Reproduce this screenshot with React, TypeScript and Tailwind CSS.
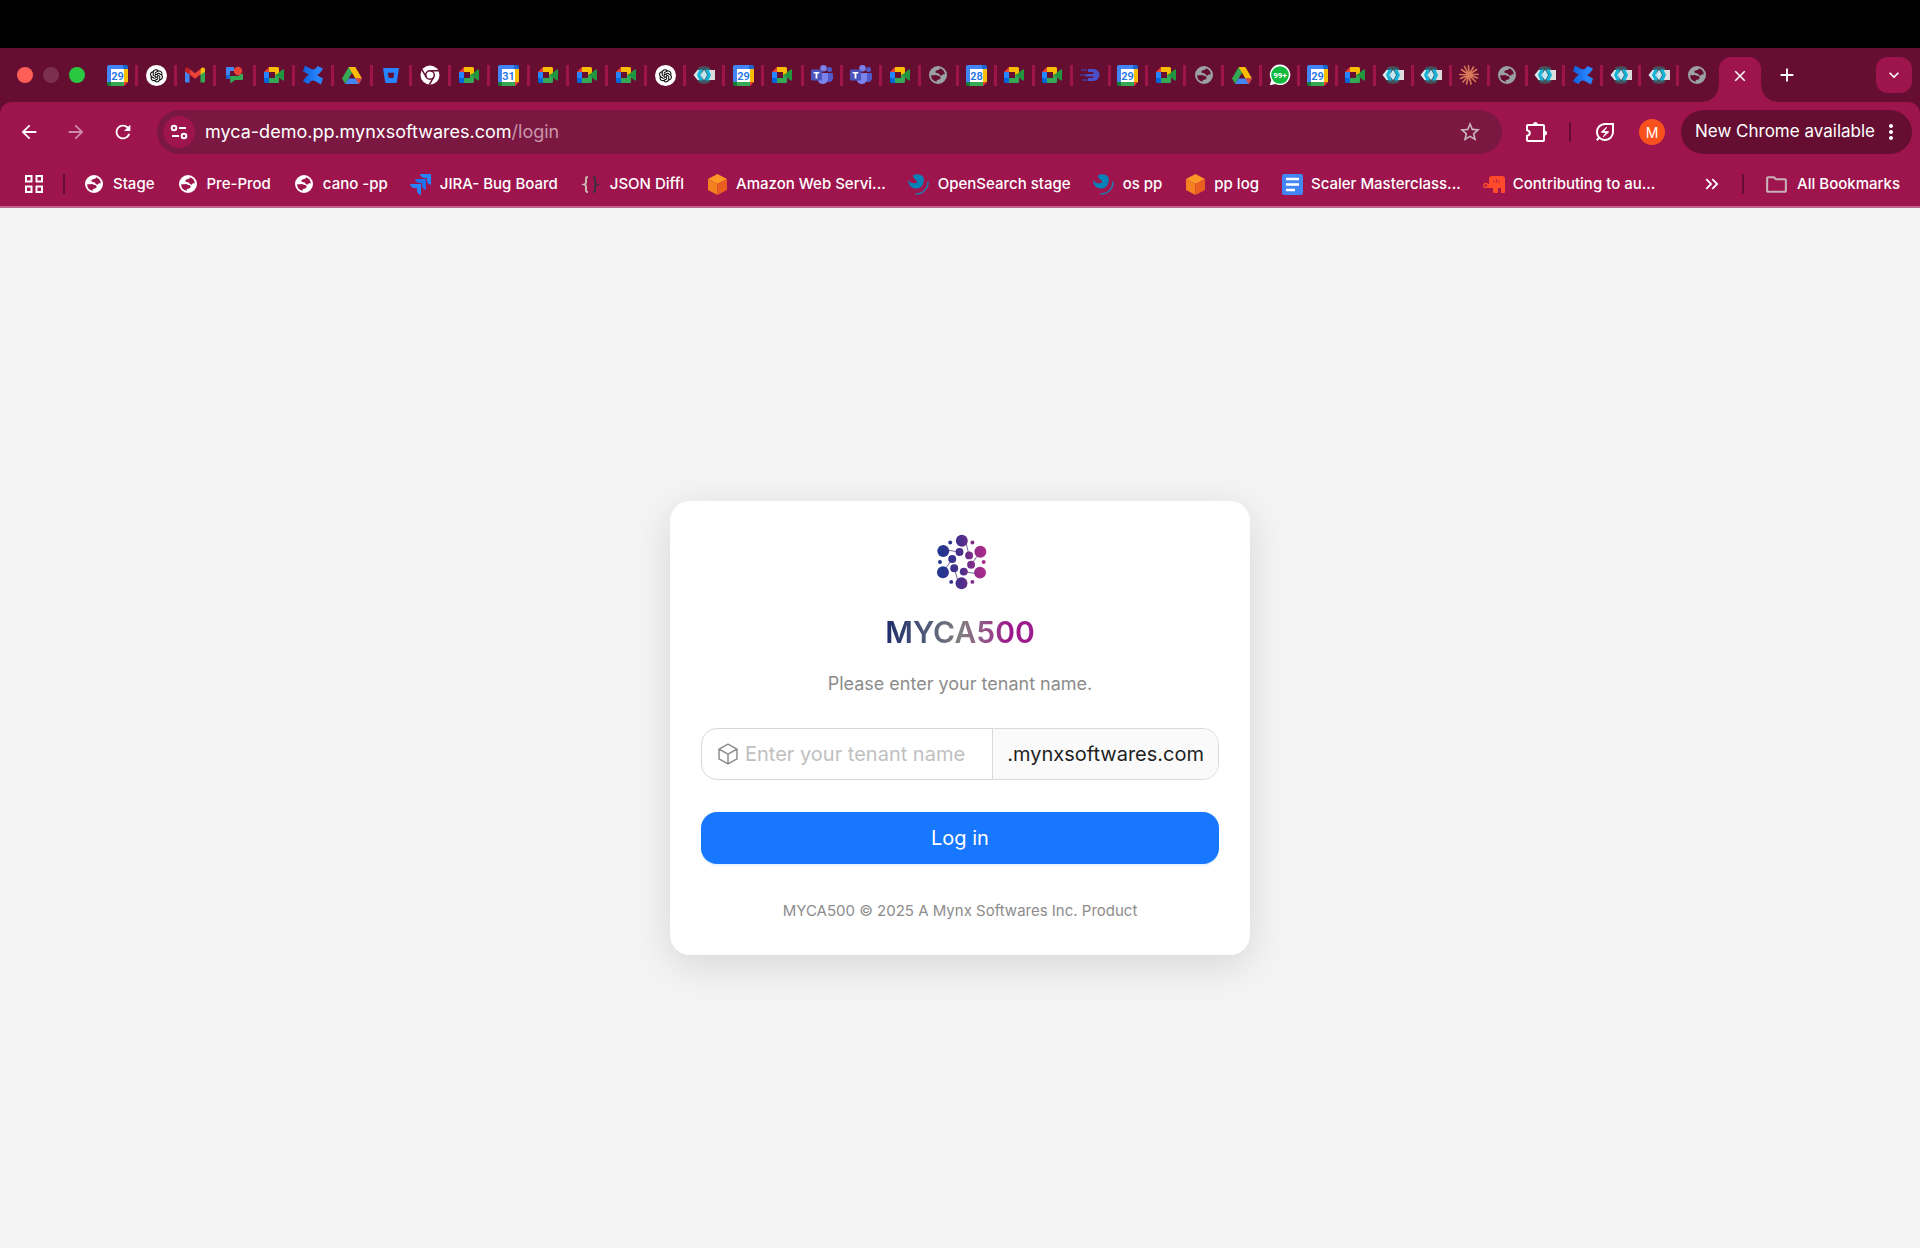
import React from "react";
import {
  MdArrowBack,
  MdArrowForward,
  MdRefresh,
  MdStarBorder,
  MdOutlineEnergySavingsLeaf,
  MdMoreVert,
  MdClose,
  MdAdd,
  MdExpandMore,
  MdOutlineFolder,
  MdKeyboardDoubleArrowRight,
} from "react-icons/md";
import { AiOutlineOpenAI } from "react-icons/ai";

/* ---------- favicons ---------- */

function Calendar({ day }: { day: string }) {
  return (
    <svg viewBox="0 0 21 21" className="size-[21px]">
      <path d="M0 2a2 2 0 0 1 2-2h14v4H4v13H0z" fill="#4285f4" />
      <path d="M16 0h3a2 2 0 0 1 2 2v2h-5z" fill="#1967d2" />
      <path d="M17 4h4v13h-4z" fill="#fbbc04" />
      <path d="M4 17h13v4H4z" fill="#34a853" />
      <path d="M0 17h4v4H2a2 2 0 0 1-2-2z" fill="#188038" />
      <path d="M17 17h4l-4 4z" fill="#ea4335" />
      <path d="M4 4h13v13H4z" fill="#fff" />
      <text x="10.5" y="14.5" textAnchor="middle" fontSize="11" fontWeight="600" fill="#1a73e8" fontFamily="Roboto, sans-serif">
        {day}
      </text>
    </svg>
  );
}

function OpenAi() {
  return (
    <span className="flex size-[21px] items-center justify-center rounded-full bg-white text-black">
      <AiOutlineOpenAI size={17} />
    </span>
  );
}

function Gmail() {
  return (
    <svg viewBox="0 0 20 16" className="h-4 w-5">
      <path d="M0 3v11.500a1 1 0 0 0 1 1h3.500V6.500z" fill="#4285f4" />
      <path d="M20 3v11.500a1 1 0 0 1-1 1h-3.500V6.500z" fill="#34a853" />
      <path d="M4.500 2v5.500L10 11.700l5.500-4.200V2L10 6.200z" fill="#ea4335" />
      <path d="M0 2.500v2l4.500 3.200V2L3.500 1C2 0 0 .700 0 2.500z" fill="#c5221f" />
      <path d="M20 2.500v2l-4.500 3.200V2l1-1C18 0 20 .700 20 2.500z" fill="#fbbc04" />
    </svg>
  );
}

function Chat() {
  return (
    <svg viewBox="0 0 20 20" className="size-5">
      <path d="M2 3a1 1 0 0 1 1-1h7v4H6v7H2z" fill="#4285f4" />
      <path d="M2 10h4v4H3a1 1 0 0 1-1-1z" fill="#1967d2" />
      <path d="M6 11h9V9h4v5a1 1 0 0 1-1 1h-7l-4.500 3.500z" fill="#34a853" />
      <circle cx="14" cy="6" r="4.200" fill="#ea4335" />
    </svg>
  );
}

function Meet() {
  return (
    <svg viewBox="0 0 20 16" className="h-4 w-5">
      <path d="M0 5l5-5v5z" fill="#ea4335" />
      <path d="M5 0h8.500a1.500 1.500 0 0 1 1.500 1.500V7l-4 1V5H5z" fill="#fbbc04" />
      <path d="M0 5h5v6H0z" fill="#2684fc" />
      <path d="M0 11h5v5H1.500A1.500 1.500 0 0 1 0 14.500z" fill="#0066da" />
      <path d="M5 11h6V8l4-1v7.500a1.500 1.500 0 0 1-1.500 1.500H5z" fill="#34a853" />
      <path d="M12 8l6.600-5.500c.600-.400 1.400 0 1.400.700v9.600c0 .700-.800 1.100-1.400.700z" fill="#22963f" />
    </svg>
  );
}

function Confluence() {
  return (
    <svg viewBox="0 0 22 22" className="size-[22px]">
      <defs>
        <linearGradient id="confluence" x1="0" x2="1">
          <stop offset="0" stopColor="#0f5fd8" />
          <stop offset="0.700" stopColor="#2684ff" />
        </linearGradient>
      </defs>
      <path d="M3 1.500l5.500 3.200c3 1.500 5 .700 7-2.700l5.500 2.500c-4 7.500-8.500 9-15 5.800L1 7.500z" fill="url(#confluence)" />
      <path d="M19 20.500l-5.500-3.200c-3-1.500-5-.700-7 2.700L1 17.500c4-7.500 8.500-9 15-5.800l5 2.800z" fill="url(#confluence)" />
    </svg>
  );
}

function Drive() {
  return (
    <svg viewBox="0 0 20 17" className="h-[17px] w-5">
      <path d="M6.700 0h6.600L10 5.700 3.300 17 0 11.500z" fill="#34a853" />
      <path d="M6.700 0h6.600L20 11.500h-6.600z" fill="#fbbc04" />
      <path d="M3.300 17l3.400-5.500H20L16.700 17z" fill="#4285f4" />
      <path d="M13.400 11.500H20L16.700 17z" fill="#ea4335" />
    </svg>
  );
}

function Bitbucket() {
  return (
    <svg viewBox="0 0 16 15" className="h-[15px] w-4">
      <path d="M.700 0h14.600a.600.600 0 0 1 .600.700l-2.100 13.500a1 1 0 0 1-1 .800H3.200a1 1 0 0 1-1-.800L.100.700A.600.600 0 0 1 .700 0zm5 10h4.600l1-5.200H4.700z" fillRule="evenodd" fill="#2684ff" />
    </svg>
  );
}

function ChromeLogo() {
  return (
    <svg viewBox="0 0 20 20" className="size-5">
      <circle cx="10" cy="10" r="9.500" fill="#fff" />
      <g fill="none" stroke="#650e32" strokeWidth="1.500">
        <circle cx="10" cy="10" r="4.300" />
        <path d="M10 5.700h8.800M6.300 12.200L1.900 4.600M13.700 12.200l-4.400 7.500" />
      </g>
    </svg>
  );
}

function Hexes() {
  return (
    <svg viewBox="0 0 22 18" className="h-[18px] w-[22px]">
      <path d="M6 1l5-1 5 1 2 3v10l-2 3-5 1-5-1-2-3V4z" fill="#46505a" />
      <path d="M15 4h7v10h-7z" fill="#dcdcdc" />
      <path d="M4.500 4h4v10h-4L.500 9z" fill="#d8e8ec" />
      <path d="M6.500 3.500H10L7.300 9l2.700 5.500H6.500L4 9z" fill="#14b4d8" />
      <path d="M12 3.500h3.500L18 9l-2.500 5.500H12L14.700 9z" fill="#14b4d8" />
      <path d="M10.300 4.500h1.400L14 9l-2.300 4.500h-1.400L8 9z" fill="#c4e9f2" />
    </svg>
  );
}

function Teams() {
  return (
    <svg viewBox="0 0 22 20" className="h-5 w-[22px]">
      <circle cx="18.500" cy="4.500" r="2.500" fill="#5059c9" />
      <circle cx="12.500" cy="3.300" r="3.300" fill="#7b83eb" />
      <path d="M15 8h6a1 1 0 0 1 1 1v4.500a4 4 0 0 1-6 3z" fill="#5059c9" />
      <path d="M7 8h10v6.500a5.300 5.300 0 0 1-10 1.500z" fill="#7b83eb" />
      <rect x="0" y="4.500" width="11" height="11" rx="1" fill="#4b53bc" />
      <path d="M2.700 7h5.600v1.600H6.400v5H4.600v-5H2.700z" fill="#fff" />
    </svg>
  );
}

function Globe({ tone = "text-white" }: { tone?: string }) {
  return (
    <svg viewBox="0 0 18 18" className={`size-[18px] ${tone}`} fill="currentColor">
      <path
        fillRule="evenodd"
        d="M9 0a9 9 0 1 1 0 18A9 9 0 0 1 9 0zM11 2.200C10.700 4 9.600 4 8 4.200 6 4.600 5.900 6.600 7.600 7c1.800.200 2.300.300 2.900 1.600.800 1.500 2.500 1.200 3 .200.500-.800 1.300-.6 2.300-.4A6.900 6.900 0 0 0 11 2.200zM2.100 9.300a6.900 6.900 0 0 0 5.700 6.500v-1.900c2.300 0 3.700-.700 3.800-2.100 0-1.300-1.200-1.700-2.400-1.700C8 9 6.900 9 5.500 9.200z"
      />
    </svg>
  );
}

function SpeedD() {
  return (
    <svg viewBox="0 0 20 14" className="h-[14px] w-5">
      <path d="M8 1h5.500a6 6 0 0 1 0 12H8v-3h5a2.500 2.500 0 0 0 0-1.500H5V6h8.500a2 2 0 0 0-.5-2H8z" fill="#4a50c8" />
      <path d="M1 2h6M0 7h7M2 12h6" stroke="#463a98" strokeWidth="1.500" />
    </svg>
  );
}

function WhatsApp() {
  return (
    <svg viewBox="0 0 22 22" className="size-[22px]">
      <path d="M11 .500a10.300 10.300 0 1 1-4.800 19.400L.800 21.300l1.500-5.200A10.300 10.300 0 0 1 11 .500z" fill="#fff" />
      <circle cx="11" cy="11" r="8.800" fill="#12b93f" />
      <text x="11" y="14" textAnchor="middle" fontSize="8" fontWeight="700" fill="#fff" fontFamily="Roboto, sans-serif">
        99+
      </text>
    </svg>
  );
}

function Claude() {
  return (
    <svg viewBox="0 0 20 20" className="size-5" stroke="#d97757" strokeWidth="1.600" strokeLinecap="round">
      <path d="M10 10L9.500.800M10 10l4.500-8M10 10l7.500-5.500M10 10l9.200-.800M10 10l8.500 3M10 10l6.500 6.500M10 10l2 9M10 10l-2.500 9M10 10l-6 7M10 10l-8.500 3.500M10 10L.800 9.500M10 10L2.500 4.500M10 10L5.500 1.500" />
    </svg>
  );
}

/* ---------- bookmark icons ---------- */

function Jira() {
  return (
    <svg viewBox="0 0 21 21" className="size-[21px]">
      <path d="M10 0h11v11a5 5 0 0 1-4-4.700V4h-2.500A5 5 0 0 1 10 0z" fill="#2684ff" />
      <path d="M5 5h11v11a5 5 0 0 1-4-4.700V9H9.500A5 5 0 0 1 5 5z" fill="#1f74ee" />
      <path d="M0 10h11v11a5 5 0 0 1-4-4.700V14H4.500A5 5 0 0 1 0 10z" fill="#2684ff" />
    </svg>
  );
}

function Braces() {
  return (
    <svg viewBox="0 0 21 21" className="size-[21px]" fill="none" strokeWidth="2">
      <path d="M8 3H7.500C6.300 3 6 3.700 6 5v3c0 1.500-.500 2.200-1.500 2.500 1 .300 1.500 1 1.500 2.500v3c0 1.300.300 2 1.500 2H8" stroke="#c9b9b0" />
      <path d="M13 3h.5c1.200 0 1.500.700 1.500 2v3c0 1.500.500 2.200 1.500 2.500-1 .300-1.500 1-1.500 2.500v3c0 1.300-.300 2-1.500 2H13" stroke="#3c3038" />
    </svg>
  );
}

function Cube() {
  return (
    <svg viewBox="0 0 19 21" className="h-[21px] w-[19px]">
      <path d="M9.500 0L19 5l-9.500 5L0 5z" fill="#fd9827" />
      <path d="M0 5l9.500 5v11L0 16z" fill="#f58020" />
      <path d="M19 5l-9.500 5v11l9.500-5z" fill="#ea5e20" />
    </svg>
  );
}

function OpenSearch() {
  return (
    <svg viewBox="0 0 21 21" className="size-[21px]">
      <path d="M5 1.500C8-.500 13-.300 15.200 3c1 1.600.800 3.200.300 4.500-.300 4.500-3.500 7.200-8 7C2.500 14.300-.200 10 .400 5.800 1.500 8.500 3.500 9.500 6 9.300c2.300-.100 3.500-1.100 2.600-2.600C7.600 5.300 5 4.500 5 1.500z" fill="#0782b8" />
      <path d="M20 8A12 12 0 0 1 8 20" fill="none" stroke="#1c7eae" strokeWidth="1.500" strokeLinecap="round" />
    </svg>
  );
}

function Doc() {
  return (
    <svg viewBox="0 0 21 21" className="size-[21px]">
      <rect width="21" height="21" rx="2" fill="#4285f4" />
      <path d="M4 5h13M4 10.500h13M4 16h9" stroke="#fff" strokeWidth="2.400" />
    </svg>
  );
}

function RedBot() {
  return (
    <svg viewBox="0 0 22 17" className="h-[17px] w-[22px]">
      <path d="M9 0h10a3 3 0 0 1 3 3v13a1 1 0 0 1-1 1h-3v-5h-3v5h-4a1 1 0 0 1-1-1v-4H5v-4h1V3a3 3 0 0 1 3-3z" fill="#ff4a2b" />
      <path d="M11 4v3M13.500 3v4M16 4v3" stroke="#b8283a" />
      <circle cx="2.800" cy="9.500" r="2" fill="none" stroke="#ff4a2b" strokeWidth="1.400" />
    </svg>
  );
}

/* ---------- browser data ---------- */

type Item = { name: string; icon: React.ReactNode };

const meet: Item = { name: "Meet", icon: <Meet /> };
const chat: Item = { name: "ChatGPT", icon: <OpenAi /> };
const hex: Item = { name: "Portal", icon: <Hexes /> };
const globe: Item = { name: "Page", icon: <Globe tone="text-[#9aa0a6]" /> };
const drive: Item = { name: "Drive", icon: <Drive /> };
const confluence: Item = { name: "Confluence", icon: <Confluence /> };
const teams: Item = { name: "Teams", icon: <Teams /> };
const cal = (day: string): Item => ({ name: `Calendar ${day}`, icon: <Calendar day={day} /> });

const wideTabs: Item[] = [
  cal("29"), chat, { name: "Gmail", icon: <Gmail /> }, { name: "Chat", icon: <Chat /> }, meet, confluence, drive,
  { name: "Bitbucket", icon: <Bitbucket /> }, { name: "Chrome", icon: <ChromeLogo /> }, meet, cal("31"), meet, meet, meet,
  chat, hex, cal("29"), meet, teams, teams, meet,
];

const narrowTabs: Item[] = [
  globe, cal("28"), meet, meet, { name: "Dashboard", icon: <SpeedD /> }, cal("29"), meet, globe, drive,
  { name: "WhatsApp", icon: <WhatsApp /> }, cal("29"), meet, hex, hex, { name: "Claude", icon: <Claude /> }, globe, hex,
  confluence, hex, hex, globe,
];

const bookmarks: Item[] = [
  { name: "Stage", icon: <Globe /> },
  { name: "Pre-Prod", icon: <Globe /> },
  { name: "cano -pp", icon: <Globe /> },
  { name: "JIRA- Bug Board", icon: <Jira /> },
  { name: "JSON Diffl", icon: <Braces /> },
  { name: "Amazon Web Servi...", icon: <Cube /> },
  { name: "OpenSearch stage", icon: <OpenSearch /> },
  { name: "os pp", icon: <OpenSearch /> },
  { name: "pp log", icon: <Cube /> },
  { name: "Scaler Masterclass...", icon: <Doc /> },
  { name: "Contributing to au...", icon: <RedBot /> },
];

function Tab({ item, last }: { item: Item; last?: boolean }) {
  return (
    <button
      aria-label={item.name}
      className={`flex h-[21px] min-w-0 flex-1 items-center justify-center border-r-[3px] ${last ? "border-transparent" : "border-[#9e154e]"}`}
    >
      {item.icon}
    </button>
  );
}

function TabStrip() {
  return (
    <div className="flex h-[54px] items-center bg-[#650e32] pr-2">
      <div className="flex w-[99px] shrink-0 gap-[10px] pl-[17px]">
        <button aria-label="Close window" className="size-4 rounded-full bg-[#ff5f57]" />
        <button aria-label="Minimize window" className="size-4 rounded-full bg-[#7b3051]" />
        <button aria-label="Zoom window" className="size-4 rounded-full bg-[#28c840]" />
      </div>
      <div className="flex flex-[822] items-center">
        {wideTabs.map((t, i) => (
          <Tab key={i} item={t} />
        ))}
      </div>
      <div className="flex flex-[796] items-center">
        {narrowTabs.map((t, i) => (
          <Tab key={i} item={t} last={i === narrowTabs.length - 1} />
        ))}
      </div>
      <div className="relative ml-[2px] flex w-[42px] items-center justify-center self-end rounded-t-xl bg-[#9e154e]">
        <span className="absolute right-full bottom-0 size-4 bg-[radial-gradient(circle_at_0_0,transparent_15px,#9e154e_16px)]" />
        <span className="absolute bottom-0 left-full size-4 bg-[radial-gradient(circle_at_100%_0,transparent_15px,#9e154e_16px)]" />
        <button aria-label="Close tab" className="flex h-[45px] items-center pb-2 text-white">
          <MdClose size={18} />
        </button>
      </div>
      <button aria-label="New tab" className="ml-[15px] text-white">
        <MdAdd size={22} />
      </button>
      <div className="w-[78px]" />
      <button aria-label="Search tabs" className="flex size-9 items-center justify-center rounded-xl bg-[#9e154e] text-white">
        <MdExpandMore size={20} />
      </button>
    </div>
  );
}

function Toolbar() {
  return (
    <div className="flex h-[60px] items-center pr-2 pl-[18px] text-white">
      <div className="flex shrink-0 items-center gap-[25px]">
        <button aria-label="Back"><MdArrowBack size={22} /></button>
        <button aria-label="Forward" className="opacity-50"><MdArrowForward size={22} /></button>
        <button aria-label="Reload"><MdRefresh size={22} /></button>
      </div>
      <div className="ml-[23px] flex h-11 min-w-0 flex-1 items-center rounded-full bg-[#7b1842] pr-5 pl-[6px]">
        <button aria-label="Site information" className="flex size-8 shrink-0 items-center justify-center rounded-full bg-[#9e154e]">
          <svg viewBox="0 0 18 16" className="h-4 w-[18px]" fill="none" stroke="currentColor" strokeWidth="2">
            <circle cx="4" cy="4" r="2.300" />
            <path d="M9 4h7M2 12h7" />
            <circle cx="14" cy="12" r="2.300" />
          </svg>
        </button>
        <div role="textbox" aria-label="Address" className="ml-[10px] flex-1 text-[18px] leading-6">
          myca-demo.pp.mynxsoftwares.com<span className="text-[#c996ab]">/login</span>
        </div>
        <button aria-label="Bookmark this page" className="text-[#cbb6be]"><MdStarBorder size={24} /></button>
      </div>
      <button aria-label="Extensions" className="ml-[22px]">
        <svg viewBox="0 0 24 24" className="size-6" fill="none" stroke="currentColor" strokeWidth="2" strokeLinejoin="round">
          <path d="M4 5h15a1 1 0 0 1 1 1v14a1 1 0 0 1-1 1H4a1 1 0 0 1-1-1v-4.200c1.800-.300 2.800-1.400 2.800-2.800S4.800 10.500 3 10.200V6a1 1 0 0 1 1-1z" />
          <path d="M9 4.500a2.500 2.500 0 0 1 5 0zM20.500 10.500a2.500 2.500 0 0 1 0 5z" fill="currentColor" stroke="none" />
        </svg>
      </button>
      <div className="ml-[21px] h-5 w-[2px] bg-[#650e32]" />
      <button aria-label="Energy saver" className="ml-[22px]"><MdOutlineEnergySavingsLeaf size={24} /></button>
      <button aria-label="Profile" className="ml-[22px] size-[26px] rounded-full bg-[#f8511d] text-[14px]">M</button>
      <button className="ml-4 flex h-11 items-center rounded-full bg-[#650e32] pr-[9px] pl-[14px] text-[17px]">
        New Chrome available
        <MdMoreVert size={24} className="ml-1" />
      </button>
    </div>
  );
}

function BookmarksBar() {
  return (
    <div className="flex h-[46px] items-center border-b-2 border-[#c0658a] pr-5 pl-[25px] text-[15px] font-medium text-white">
      <button aria-label="Tab groups">
        <svg viewBox="0 0 18 18" className="size-[18px]" fill="none" stroke="currentColor" strokeWidth="2">
          <path d="M1 1h5.500v5.500H1zM11.500 1H17v5.500h-5.500zM1 11.500h5.500V17H1zM11.500 11.500H17V17h-5.500z" />
        </svg>
      </button>
      <div className="ml-5 h-5 w-[2px] bg-[#650e32]" />
      <nav aria-label="Bookmarks" className="ml-[18px] flex min-w-0 flex-1 gap-[22px]">
        {bookmarks.map((b) => (
          <a key={b.name} href="#" className="flex items-center gap-2 whitespace-nowrap">
            <span className="flex w-[22px] justify-center">{b.icon}</span>
            {b.name}
          </a>
        ))}
      </nav>
      <button aria-label="More bookmarks"><MdKeyboardDoubleArrowRight size={22} /></button>
      <div className="ml-[19px] h-5 w-[2px] bg-[#650e32]" />
      <a href="#" className="ml-5 flex items-center gap-2">
        <MdOutlineFolder size={25} className="text-[#c9b0b9]" />
        All Bookmarks
      </a>
    </div>
  );
}

/* ---------- login page ---------- */

function Logo() {
  return (
    <svg viewBox="40 40 160 168" className="h-14 w-[53px]" role="img" aria-label="MYCA500 logo">
      <defs>
        <linearGradient id="brand" gradientUnits="userSpaceOnUse" x1="50" x2="198" y1="124" y2="124">
          <stop offset="0.100" stopColor="#25368f" />
          <stop offset="0.500" stopColor="#4d2f8c" />
          <stop offset="0.800" stopColor="#962b88" />
          <stop offset="1" stopColor="#ad2b8a" />
        </linearGradient>
      </defs>
      <path
        d="M137 68l9 36M68 86l49 8M67 155l28-40M101 143l11 36M130 153l49 8M180 93l-28 39"
        stroke="#5a4480"
        strokeWidth="2.500"
      />
      <g fill="url(#brand)">
        <circle cx="124" cy="60" r="18" />
        <circle cx="68" cy="91" r="18" />
        <circle cx="180" cy="93" r="18" />
        <circle cx="67" cy="155" r="18" />
        <circle cx="179" cy="156" r="18" />
        <circle cx="123" cy="188" r="18" />
        <circle cx="117" cy="94" r="12" />
        <circle cx="146" cy="104" r="12" />
        <circle cx="95" cy="115" r="12" />
        <circle cx="152" cy="132" r="12" />
        <circle cx="101" cy="143" r="12" />
        <circle cx="130" cy="153" r="12" />
        <circle cx="89" cy="65" r="6" />
        <circle cx="156" cy="65" r="6" />
        <circle cx="58" cy="124" r="6" />
        <circle cx="190" cy="124" r="6" />
        <circle cx="92" cy="184" r="6" />
        <circle cx="156" cy="184" r="6" />
      </g>
    </svg>
  );
}

function LoginCard() {
  return (
    <form
      onSubmit={(e) => e.preventDefault()}
      className="flex w-full max-w-[580px] flex-col items-center rounded-[20px] bg-white px-[31px] pt-[33px] pb-8 shadow-[0_10px_40px_rgba(0,0,0,0.12)]"
    >
      <Logo />
      <h1 className="mt-[22px] bg-linear-to-r from-[#1f2a6b] via-[#7f7f7f] to-[#9c1a8c] to-80% bg-clip-text text-[30px] leading-10 font-semibold text-transparent">
        MYCA500
      </h1>
      <p className="mt-[18px] text-[18px] leading-7 text-[#8c8c8c]">Please enter your tenant name.</p>
      <div className="mt-[30px] flex h-[52px] w-full overflow-hidden rounded-2xl border border-[#d9d9d9]">
        <label className="flex min-w-0 flex-1 items-center gap-[7px] pl-4">
          <svg viewBox="0 0 20 22" className="h-[22px] w-5 shrink-0" fill="none" stroke="#8c8c8c" strokeWidth="1.500" strokeLinejoin="round">
            <path d="M10 1.200l9 5v9.600l-9 5-9-5V6.200zM1 6.200l9 5 9-5M10 11.200v9.600" />
          </svg>
          <input
            aria-label="Tenant name"
            placeholder="Enter your tenant name"
            className="w-full min-w-0 text-[20px] outline-none placeholder:text-[#bfbfbf]"
          />
        </label>
        <span className="flex items-center border-l border-[#d9d9d9] bg-[#fafafa] px-[14px] text-[20px] text-[#1f1f1f]">
          .mynxsoftwares.com
        </span>
      </div>
      <button type="submit" className="mt-8 h-[52px] w-full rounded-2xl bg-[#1777ff] text-[20px] text-white shadow-[0_2px_0_rgba(5,145,255,0.1)]">
        Log in
      </button>
      <p className="mt-[35px] text-[15px] leading-6 text-[#8c8c8c]">MYCA500 © 2025 A Mynx Softwares Inc. Product</p>
    </form>
  );
}

export default function App() {
  return (
    <div className="flex min-h-screen flex-col bg-[#f4f4f4] font-['Inter',sans-serif]">
      <div className="h-12 bg-black" />
      <header className="bg-[#650e32]">
        <TabStrip />
        <div className="rounded-t-xl bg-[#9e154e]">
          <Toolbar />
          <BookmarksBar />
        </div>
      </header>
      <main className="flex flex-1 items-center justify-center">
        <LoginCard />
      </main>
    </div>
  );
}
